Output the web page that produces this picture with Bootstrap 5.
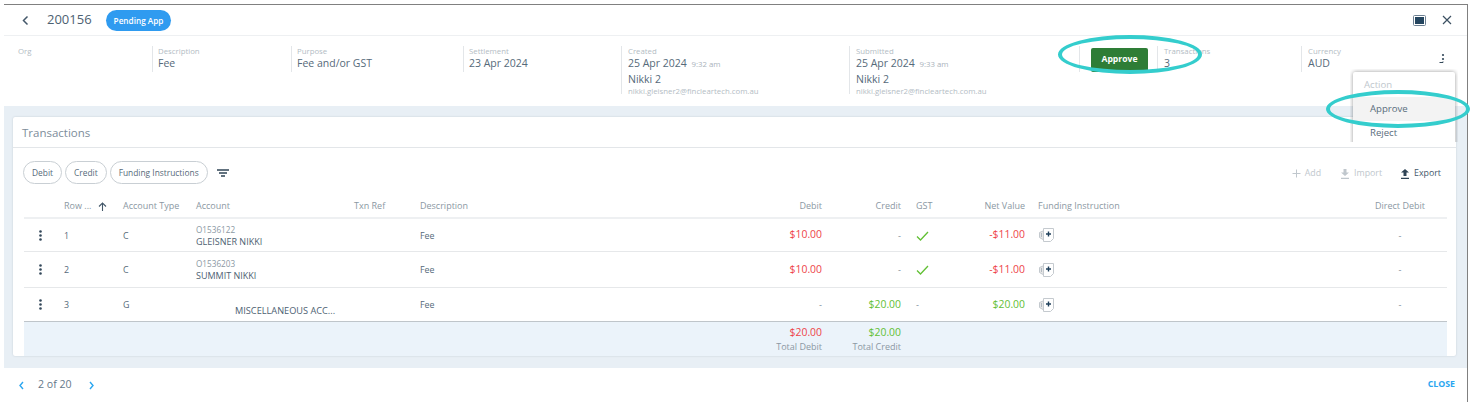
<!DOCTYPE html>
<html lang="en">
<head>
<meta charset="UTF-8">
<title>Transaction 200156</title>
<link href="https://cdn.jsdelivr.net/npm/bootstrap@5.3.0/dist/css/bootstrap.min.css" rel="stylesheet">
<style>
html, body { height: 407px; overflow: hidden; background: #fff; }
body { font-family: "Open Sans", "Liberation Sans", sans-serif; color: #4f6475; position: relative; }
.frame { margin: 4px 3px 0 4px; height: 398px; border-top: 1px solid #808080; border-right: 1px solid #808080; }
.topbar { height: 31px; padding-left: 17px; padding-right: 15px; border-bottom: 1px solid #eef0f2; }
.back-btn { margin-right: 17px; }
.ref-no { font-size: 13px; color: #4d6172; margin-right: 14px; }
.status-pill { background: #2f9bf0; font-size: 8.2px; font-weight: 600; padding: 0 8px; height: 21px; line-height: 21px; }
.win-btn { margin-right: 16px; }
.meta-strip { height: 70px; padding: 10px 0 0 14px; }
.meta-cell { border-left: 1px solid #e3e6e9; padding-left: 5px; height: 26px; }
.meta-cell.tall { height: 48px; }
.meta-cell.first { border-left: 0; padding-left: 0; width: 134px; }
.w-desc { width: 139px; } .w-purpose { width: 172px; } .w-settle { width: 158px; }
.w-created { width: 228px; padding-left: 6px; } .w-sub { width: 230px; padding-left: 6px; } .w-act { width: 78px; padding-left: 11px; }
.w-txn { width: 144px; padding-left: 6px; } .w-cur { width: 138px; padding-left: 6px; }
.meta-label { font-size: 7.8px; line-height: 11px; color: #b3bcc4; }
.meta-val { font-size: 10.5px; line-height: 13px; color: #566a7a; }
.meta-time { font-size: 7.8px; color: #aab3bb; margin-left: 2px; }
.meta-name { margin-top: 2px; }
.meta-mail { font-size: 7.8px; line-height: 10px; color: #b3bcc4; }
.approve-btn { background: #2e7d36; color: #fff; border: 0; font-size: 8.6px; font-weight: 700; width: 57px; height: 24px; padding: 0; border-radius: 2px; }
.meta-kebab { padding-top: 7px; }
.body-band { background: #e8eff5; height: 262px; padding: 11px 11px 12px 9px; }
.txn-card { height: 239px; border: 0; border-radius: 2px; box-shadow: 0 0 2px rgba(80,100,120,.25); overflow: hidden; }
.txn-head { height: 31px; flex-shrink: 0; padding: 8px 9px 0; background: #fff; border-bottom: 1px solid #e3e6e9; font-size: 11.5px; line-height: 16px; color: #7d8d9a; }
.tools { height: 41px; flex-shrink: 0; padding: 13px 15px 0 10px; }
.chip-btn { height: 23px; padding: 0 8px; font-size: 8.4px; line-height: 20px; color: #566a7a; border: 1px solid #c9cfd4; border-radius: 12px; background: #fff; margin-right: 3px; }
.filter-ico { margin-left: 6px; }
.tool-act { font-size: 8.8px; color: #c0c7cd; margin-left: 18px; padding-top: 6px; }
.tool-act.on { color: #44586a; }
.tool-act svg { margin-right: 4px; }
.tool-add { margin-right: 1px; }
.txn-table { table-layout: fixed; width: 1423px; margin: 0 0 0 11px; font-size: 8.9px; color: #566a7a; border-collapse: collapse; }
.txn-table th, .txn-table td { padding: 0; border: 0; vertical-align: middle; background: transparent; box-shadow: none; white-space: nowrap; }
.txn-table td { color: #566a7a; padding-top: 1px; border-bottom: 1px solid #e6e8ea; }
.txn-table th { height: 29px; font-weight: 400; font-size: 9px; color: #8b98a3; border-bottom: 2px solid #eef0f2; padding-top: 6px; }
.c1 { width: 40px; } .c2 { width: 59px; } .c3 { width: 73px; } .c4 { width: 158px; } .c5 { width: 66px; } .c6 { width: 340px; }
.c7 { width: 70px; } .c8 { width: 79px; } .c9 { width: 66px; } .c10 { width: 58px; } .c11 { width: 342px; } .c12 { width: 72px; }
.txn-table .amt { text-align: right; padding-right: 8px; }
.txn-table td.amt { font-size: 10.4px; }
.txn-table .gst { padding-left: 7px; }
.txn-table .fund { padding-left: 5px; }
.txn-table .dd { text-align: center; padding-right: 22px; }
.txn-table td.dash { font-size: 9px; color: #7d8d9a; }
.txn-table td.neg { color: #ee4449; }
.txn-table td.pos { color: #62c035; }
.h-a { height: 33px; } .h-b { height: 36px; } .h-c { height: 34px; }
.acc-no { font-size: 8.2px; line-height: 11px; color: #8b98a3; padding-top: 1px; }
.acc-name { font-size: 9px; line-height: 13px; color: #4d6172; }
.acc-misc { font-size: 9.2px; padding-left: 39px; padding-top: 12px; }
.txn-table td.kebab-cell { padding-left: 15px; }
.kebab-cell svg { display: block; }
.txn-table tr.h-c td { border-bottom: 1px solid #bfc5ca; }
.txn-table .total-row td { height: 35px; padding-top: 2px; background: #ebf3fa; border-bottom: 1px solid #d9dee3; }
.total-lbl { font-size: 9px; line-height: 12px; color: #8b98a3; margin-top: 2px; }
.total-amt { line-height: 13px; }
.pager { height: 34px; padding: 0 12px 0 14px; font-size: 10.6px; color: #66798a; }
.pager-text { margin: 0 16px 0 13px; }
.close-link { color: #2aa6f0; font-size: 8.8px; font-weight: 700; text-decoration: none; }
.menu-clip { position: absolute; left: 1350px; top: 69px; width: 108px; height: 73px; overflow: hidden; padding: 3px 3px 0; }
.action-menu { position: static; display: block; min-width: 0; width: 102px; height: 90px; padding: 0; border: 0; border-radius: 2px; box-shadow: 0 0 4px rgba(0,0,0,.4); font-size: 9.6px; }
.action-menu .dropdown-header { padding: 6px 11px 0; height: 25px; font-size: 9.6px; color: #c0c7cd; }
.action-menu .dropdown-item { padding: 0 17px; color: #5a6d7c; height: 24px; line-height: 24px; }
.action-menu .dropdown-item.active { background: #f3f3f3; color: #5a6d7c; }
.teal-ring { position: absolute; border: 4px solid #34cdcd; border-radius: 50%; pointer-events: none; }
.ring-a { left: 1058px; top: 35px; width: 144px; height: 39px; }
.ring-b { left: 1326px; top: 90px; width: 144px; height: 38px; }
</style>
</head>
<body>
<div class="frame d-flex flex-column">

  <div class="topbar d-flex align-items-center">
    <span class="back-btn d-flex"><svg width="9" height="11" viewBox="0 0 9 11"><path d="M6.5 1.5 2.5 5.5l4 4" fill="none" stroke="#44586a" stroke-width="1.5"/></svg></span>
    <span class="ref-no">200156</span>
    <span class="badge rounded-pill status-pill">Pending App</span>
    <span class="ms-auto win-btn d-flex"><svg width="13" height="11" viewBox="0 0 13 11"><rect x=".5" y=".5" width="12" height="10" rx="1" fill="#fff" stroke="#6d8092"/><rect x="2" y="2" width="9" height="7" fill="#24455f"/></svg></span>
    <span class="d-flex"><svg width="10" height="10" viewBox="0 0 10 10"><path d="M1 1l8 8M9 1l-8 8" stroke="#3c5062" stroke-width="1.2"/></svg></span>
  </div>

  <div class="meta-strip d-flex align-items-start">
    <div class="meta-cell first"><div class="meta-label">Org</div></div>
    <div class="meta-cell w-desc"><div class="meta-label">Description</div><div class="meta-val">Fee</div></div>
    <div class="meta-cell w-purpose"><div class="meta-label">Purpose</div><div class="meta-val">Fee and/or GST</div></div>
    <div class="meta-cell w-settle"><div class="meta-label">Settlement</div><div class="meta-val">23 Apr 2024</div></div>
    <div class="meta-cell tall w-created">
      <div class="meta-label">Created</div>
      <div class="meta-val">25 Apr 2024 <span class="meta-time">9:32 am</span></div>
      <div class="meta-val meta-name">Nikki 2</div>
      <div class="meta-mail">nikki.gleisner2@fincleartech.com.au</div>
    </div>
    <div class="meta-cell tall w-sub">
      <div class="meta-label">Submitted</div>
      <div class="meta-val">25 Apr 2024 <span class="meta-time">9:33 am</span></div>
      <div class="meta-val meta-name">Nikki 2</div>
      <div class="meta-mail">nikki.gleisner2@fincleartech.com.au</div>
    </div>
    <div class="meta-cell w-act"><button class="btn approve-btn">Approve</button></div>
    <div class="meta-cell w-txn"><div class="meta-label">Transactions</div><div class="meta-val">3</div></div>
    <div class="meta-cell w-cur"><div class="meta-label">Currency</div><div class="meta-val">AUD</div></div>
    <div class="meta-kebab d-flex"><svg width="6" height="12" viewBox="0 0 6 12"><circle cx="4" cy="2" r="1.1" fill="#33485a"/><circle cx="4" cy="6" r="1.1" fill="#33485a"/><path d="M.5 9.5h3.5v-1" fill="none" stroke="#33485a" stroke-width="1"/></svg></div>
  </div>

  <div class="body-band">
    <div class="card txn-card">
      <div class="card-header txn-head">Transactions</div>
      <div class="tools d-flex align-items-start">
        <button class="btn chip-btn">Debit</button>
        <button class="btn chip-btn">Credit</button>
        <button class="btn chip-btn">Funding Instructions</button>
        <span class="filter-ico d-flex pt-2"><svg width="12" height="8" viewBox="0 0 12 8"><path d="M0 1h12M2 4h8M4 7h4" stroke="#2f4456" stroke-width="1.3"/></svg></span>
        <span class="tool-act tool-add ms-auto d-flex align-items-center"><svg width="9" height="9" viewBox="0 0 9 9"><path d="M4.5 .5v8M.5 4.5h8" stroke="#c0c7cd" stroke-width="1"/></svg>Add</span>
        <span class="tool-act d-flex align-items-center"><svg width="10" height="10" viewBox="0 0 10 10"><path d="M3.5 0h3v3.5H9L5 7 1 3.5h2.5zM1 8.8h8V10H1z" fill="#c0c7cd"/></svg>Import</span>
        <span class="tool-act on d-flex align-items-center"><svg width="10" height="10" viewBox="0 0 10 10"><path d="M3.5 7h3V3.5H9L5 0 1 3.5h2.5zM1 8.8h8V10H1z" fill="#2f4456"/></svg>Export</span>
      </div>
      <table class="table txn-table">
        <colgroup>
          <col class="c1"><col class="c2"><col class="c3"><col class="c4"><col class="c5"><col class="c6"><col class="c7"><col class="c8"><col class="c9"><col class="c10"><col class="c11"><col class="c12">
        </colgroup>
        <thead>
          <tr>
            <th></th>
            <th>Row ... <svg class="ms-1" width="9" height="9" viewBox="0 0 9 9"><path d="M4.5 9V1M1 4.5 4.5 1 8 4.5" fill="none" stroke="#44586a" stroke-width="1.1"/></svg></th>
            <th>Account Type</th>
            <th>Account</th>
            <th>Txn Ref</th>
            <th>Description</th>
            <th class="amt">Debit</th>
            <th class="amt">Credit</th>
            <th class="gst">GST</th>
            <th class="amt">Net Value</th>
            <th class="fund">Funding Instruction</th>
            <th class="dd">Direct Debit</th>
          </tr>
        </thead>
        <tbody>
          <tr class="h-a">
            <td class="kebab-cell"><svg width="3" height="11" viewBox="0 0 3 11"><circle cx="1.5" cy="1.5" r="1.3" fill="#33485a"/><circle cx="1.5" cy="5.5" r="1.3" fill="#33485a"/><circle cx="1.5" cy="9.5" r="1.3" fill="#33485a"/></svg></td>
            <td>1</td><td>C</td>
            <td><div class="acc-no">O1536122</div><div class="acc-name">GLEISNER NIKKI</div></td>
            <td></td><td>Fee</td>
            <td class="amt neg">$10.00</td>
            <td class="amt dash">-</td>
            <td class="gst"><svg width="13" height="10" viewBox="0 0 13 10"><path d="M1 5.5 4.5 9 12 1" fill="none" stroke="#62c035" stroke-width="1.3"/></svg></td>
            <td class="amt neg">-$11.00</td>
            <td class="fund"><svg width="17" height="16" viewBox="0 0 17 16"><use href="#fund-ico"/></svg></td>
            <td class="dd dash">-</td>
          </tr>
          <tr class="h-b">
            <td class="kebab-cell"><svg width="3" height="11" viewBox="0 0 3 11"><circle cx="1.5" cy="1.5" r="1.3" fill="#33485a"/><circle cx="1.5" cy="5.5" r="1.3" fill="#33485a"/><circle cx="1.5" cy="9.5" r="1.3" fill="#33485a"/></svg></td>
            <td>2</td><td>C</td>
            <td><div class="acc-no">O1536203</div><div class="acc-name">SUMMIT NIKKI</div></td>
            <td></td><td>Fee</td>
            <td class="amt neg">$10.00</td>
            <td class="amt dash">-</td>
            <td class="gst"><svg width="13" height="10" viewBox="0 0 13 10"><path d="M1 5.5 4.5 9 12 1" fill="none" stroke="#62c035" stroke-width="1.3"/></svg></td>
            <td class="amt neg">-$11.00</td>
            <td class="fund"><svg width="17" height="16" viewBox="0 0 17 16"><use href="#fund-ico"/></svg></td>
            <td class="dd dash">-</td>
          </tr>
          <tr class="h-c">
            <td class="kebab-cell"><svg width="3" height="11" viewBox="0 0 3 11"><circle cx="1.5" cy="1.5" r="1.3" fill="#33485a"/><circle cx="1.5" cy="5.5" r="1.3" fill="#33485a"/><circle cx="1.5" cy="9.5" r="1.3" fill="#33485a"/></svg></td>
            <td>3</td><td>G</td>
            <td><div class="acc-name acc-misc">MISCELLANEOUS ACC...</div></td>
            <td></td><td>Fee</td>
            <td class="amt dash">-</td>
            <td class="amt pos">$20.00</td>
            <td class="gst dash">-</td>
            <td class="amt pos">$20.00</td>
            <td class="fund"><svg width="17" height="16" viewBox="0 0 17 16"><use href="#fund-ico"/></svg></td>
            <td class="dd dash">-</td>
          </tr>
          <tr class="total-row">
            <td></td><td></td><td></td><td></td><td></td><td></td>
            <td class="amt neg"><div class="total-amt">$20.00</div><div class="total-lbl">Total Debit</div></td>
            <td class="amt pos"><div class="total-amt">$20.00</div><div class="total-lbl">Total Credit</div></td>
            <td></td><td></td><td></td><td></td>
          </tr>
        </tbody>
      </table>
    </div>
  </div>

  <div class="pager d-flex align-items-center">
    <svg width="7" height="9" viewBox="0 0 7 9"><path d="M5 1 2 4.5 5 8" fill="none" stroke="#2aa6f0" stroke-width="1.4"/></svg>
    <span class="pager-text">2 of 20</span>
    <svg width="7" height="9" viewBox="0 0 7 9"><path d="M2 1l3 3.5L2 8" fill="none" stroke="#2aa6f0" stroke-width="1.4"/></svg>
    <a class="close-link ms-auto" href="#">CLOSE</a>
  </div>
</div>

<svg width="0" height="0" class="d-block">
  <defs>
    <g id="fund-ico">
      <path d="M5 4 1.5 5.5v5L5 12.5" fill="#e6e6e6" stroke="#c3c9ce"/>
      <path d="M3.5 6v4" stroke="#b3bbc2"/>
      <path d="M5.5 1.5h10v10l-3 3h-7z" fill="#fff" stroke="#c5cacf"/>
      <path d="M10.5 4.5v5M8 7h5" stroke="#1f3f5a" stroke-width="1.4"/>
    </g>
  </defs>
</svg>

<div class="menu-clip">
  <div class="dropdown-menu action-menu">
    <div class="dropdown-header">Action</div>
    <a class="dropdown-item active" href="#">Approve</a>
    <a class="dropdown-item" href="#">Reject</a>
  </div>
</div>
<div class="teal-ring ring-a"></div>
<div class="teal-ring ring-b"></div>
</body>
</html>
